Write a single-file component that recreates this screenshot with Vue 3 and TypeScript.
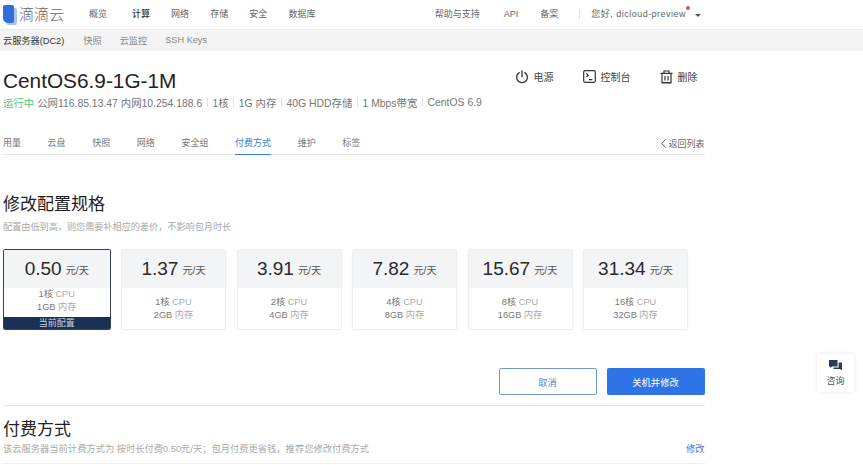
<script setup lang="ts">
const navLeft = [
  { label: '概览', active: false },
  { label: '计算', active: true },
  { label: '网络', active: false },
  { label: '存储', active: false },
  { label: '安全', active: false },
  { label: '数据库', active: false },
]
const subNav = ['快照', '云监控', 'SSH Keys']
const meta = ['1核', '1G 内存', '40G HDD存储', '1 Mbps带宽', 'CentOS 6.9']
const tabs = ['用量', '云盘', '快照', '网络', '安全组', '付费方式', '维护', '标签']
const plans = [
  { price: '0.50', cpu: '1核', mem: '1GB', current: true },
  { price: '1.37', cpu: '1核', mem: '2GB', current: false },
  { price: '3.91', cpu: '2核', mem: '4GB', current: false },
  { price: '7.82', cpu: '4核', mem: '8GB', current: false },
  { price: '15.67', cpu: '8核', mem: '16GB', current: false },
  { price: '31.34', cpu: '16核', mem: '32GB', current: false },
]
</script>

<template>
  <div class="page">
    <header class="topbar">
      <div class="logo">
        <svg class="logo-mark" width="14" height="20" viewBox="0 0 14 20">
          <rect x="3" y="3" width="11" height="17" rx="2" fill="#a9c6ef" />
          <path d="M0 2a2 2 0 0 1 2-2h7a2 2 0 0 1 2 2v14a2 2 0 0 1-2 2H5a5 5 0 0 1-5-5z" fill="#2f6fdc" />
        </svg>
        <span class="logo-text">滴滴云</span>
      </div>
      <nav class="nav-left">
        <span v-for="n in navLeft" :key="n.label" :class="['nav-item', { active: n.active }]">{{ n.label }}</span>
      </nav>
      <div class="nav-right">
        <span class="nr-help">帮助与支持</span>
        <span class="nr-api">API</span>
        <span class="nr-bei">备案</span>
        <span class="nr-sep"></span>
        <span class="nr-user">您好, dicloud-preview<i class="dot"></i></span>
        <i class="caret"></i>
      </div>
    </header>
    <div class="subnav">
      <span class="sub-active">云服务器(DC2)</span>
      <span v-for="s in subNav" :key="s" class="sub-item">{{ s }}</span>
    </div>

    <main class="content">
      <div class="title-row">
        <h1 class="title">CentOS6.9-1G-1M</h1>
        <div class="actions">
          <span class="action">
            <svg width="14" height="14" viewBox="0 0 14 14" fill="none" stroke="#333" stroke-width="1.3" stroke-linecap="round">
              <path d="M4.2 2.6a5.4 5.4 0 1 0 5.6 0" />
              <path d="M7 0.8v6" />
            </svg>
            电源
          </span>
          <span class="action">
            <svg width="13" height="13" viewBox="0 0 13 13" fill="none" stroke="#333" stroke-width="1.2">
              <rect x="0.7" y="0.7" width="11.6" height="11.6" rx="1.2" />
              <path d="M3.2 3.4l2 1.8-2 1.8M6 9.6h3.4" />
            </svg>
            控制台
          </span>
          <span class="action">
            <svg width="13" height="14" viewBox="0 0 13 14" fill="none" stroke="#333" stroke-width="1.2">
              <path d="M0.5 3.4h12M4 3.2V1h5v2.2M2 3.4V13h9V3.4M5 6v4.6M8 6v4.6M2 12.6h9" />
            </svg>
            删除
          </span>
        </div>
      </div>
      <div class="meta">
        <span class="running">运行中</span>
        <span class="ip">公网116.85.13.47 内网10.254.188.6</span>
        <template v-for="m in meta" :key="m">
          <i class="meta-sep"></i>
          <span>{{ m }}</span>
        </template>
      </div>

      <div class="tabs">
        <div class="tab-list">
          <span v-for="t in tabs" :key="t" :class="['tab', { active: t === '付费方式' }]">{{ t }}</span>
        </div>
        <span class="back">
          <svg width="5" height="9" viewBox="0 0 5 9" fill="none" stroke="#555" stroke-width="1">
            <path d="M4.5 0.5L0.7 4.5l3.8 4" />
          </svg>
          返回列表
        </span>
      </div>

      <h2 class="section-title first">修改配置规格</h2>
      <p class="hint">配置由低到高，则您需要补相应的差价，不影响包月时长</p>

      <div class="plans">
        <div v-for="p in plans" :key="p.price" :class="['plan', { current: p.current }]">
          <div class="plan-price">
            <span class="price">{{ p.price }}</span>
            <span class="unit">元/天</span>
          </div>
          <div class="plan-spec">
            <div>{{ p.cpu }} <span class="light">CPU</span></div>
            <div>{{ p.mem }} <span class="light">内存</span></div>
          </div>
          <div v-if="p.current" class="plan-tag">当前配置</div>
        </div>
      </div>

      <div class="buttons">
        <button class="btn ghost" type="button">取消</button>
        <button class="btn primary" type="button">关机并修改</button>
      </div>

      <div class="pay">
        <h2 class="section-title">付费方式</h2>
        <div class="pay-row">
          <span class="pay-text">该云服务器当前计费方式为 按时长付费0.50元/天；包月付费更省钱，推荐您修改付费方式</span>
          <span class="pay-link">修改</span>
        </div>
      </div>
    </main>

    <aside class="consult">
      <svg width="13" height="11" viewBox="0 0 13 11">
        <path d="M0 0h8.5v6.5H3L1.2 8V6.5H0z" fill="#2b3a55" />
        <path d="M9.6 2.6H13v8l-2-1.6H4.6V7.6h5z" fill="#2b3a55" />
      </svg>
      <span>咨询</span>
    </aside>
  </div>
</template>

<style>
html, body { margin: 0; background: #fff; overflow: hidden; }
</style>

<style scoped>
.page {
  position: relative;
  width: 863px;
  height: 465px;
  overflow: hidden;
  font-family: "Liberation Sans", "Noto Sans CJK SC", sans-serif;
  color: #333;
  background: #fff;
}
.topbar {
  height: 30px;
  display: flex;
  align-items: center;
  box-sizing: border-box;
  padding-left: 3px;
  padding-bottom: 2px;
  border-bottom: 1px solid #ececec;
}
.logo { display: flex; align-items: center; width: 86px; }
.logo-mark { margin-top: 2px; }
.logo-text { margin-left: 2px; font-size: 15px; font-weight: 300; color: #666; letter-spacing: 0.1px; }
.nav-left { display: flex; gap: 21px; font-size: 9px; color: #666; }
.nav-item:nth-child(2) { margin-left: 4px; }
.nav-item:nth-child(4) { margin-left: 0.3px; }
.nav-item.active { color: #333; font-weight: 500; }
.nav-right { margin-left: auto; display: flex; align-items: center; font-size: 9px; color: #666; padding-right: 162px; position: relative; }
.nr-help { margin-right: 24px; }
.nr-api { margin-right: 22px; }
.nr-bei { margin-right: 21px; }
.nr-sep { width: 1px; height: 10px; background: #ddd; margin-right: 11px; }
.nr-user { position: relative; letter-spacing: 0.48px; }
.dot {
  position: absolute;
  right: -4px;
  top: -1px;
  width: 4px;
  height: 4px;
  border-radius: 50%;
  background: #d9534f;
}
.caret {
  margin-left: 9px;
  margin-top: 3px;
  width: 0;
  height: 0;
  border-left: 3px solid transparent;
  border-right: 3px solid transparent;
  border-top: 3px solid #555;
}
.subnav {
  height: 21px;
  display: flex;
  align-items: center;
  padding-left: 3px;
  padding-bottom: 2px;
  box-sizing: border-box;
  background: #f4f4f4;
  font-size: 9.2px;
  color: #888;
}
.sub-active { color: #333; margin-right: 19px; }
.sub-item { margin-right: 18px; }
.content { width: 701.5px; margin-left: 3px; }
.title-row { display: flex; justify-content: space-between; height: 42px; align-items: flex-end; }
.title { margin: 0; font-size: 20.8px; line-height: 24px; font-weight: 400; color: #222; }
.actions { display: flex; gap: 29px; font-size: 10px; margin-right: 7px; align-self: flex-end; padding-bottom: 9px; }
.action { display: flex; align-items: center; gap: 5px; color: #444; }
.meta {
  display: flex;
  align-items: center;
  font-size: 10.4px;
  color: #777;
  margin-top: 2px;
  height: 15px;
  white-space: nowrap;
}
.running { color: #3fca7a; margin-right: 3px; }
.meta-sep { width: 1px; height: 9px; background: #e2e2e2; margin: 0 4.6px; }
.tabs {
  display: flex;
  justify-content: space-between;
  height: 19px;
  margin-top: 26px;
  border-bottom: 1px solid #e8e8e8;
  font-size: 9px;
  color: #777;
  box-sizing: border-box;
}
.tab-list { display: flex; gap: 26.6px; }
.tab { height: 19px; line-height: 15px; box-sizing: border-box; }
.tab.active { color: #3c7bd6; border-bottom: 1px solid #3c7bd6; }
.back { display: flex; align-items: center; gap: 2px; height: 15px; color: #666; }
.section-title { margin: 0; font-size: 17px; line-height: 22px; font-weight: 400; color: #222; }
.section-title.first { margin-top: 39px; }
.hint { margin: 4px 0 0; font-size: 9.15px; line-height: 14px; color: #aaa; }
.plans { display: flex; gap: 10.5px; margin-top: 15px; align-items: flex-start; }
.plan {
  position: relative;
  width: 105px;
  height: 81px;
  box-sizing: border-box;
  border: 1px solid #eee;
  border-radius: 2px;
  box-shadow: 0 0 2px rgba(0, 0, 0, 0.06);
  display: flex;
  flex-direction: column;
  overflow: hidden;
}
.plan.current { width: 107.5px; border-color: #3a4352; }
.plan-price {
  height: 38px;
  background: #f3f4f6;
  display: flex;
  align-items: center;
  justify-content: center;
  gap: 4px;
  flex: none;
}
.price { font-size: 19px; color: #2a2a2a; }
.unit { font-size: 10.2px; color: #555; }
.plan-spec {
  flex: 1;
  display: flex;
  flex-direction: column;
  justify-content: center;
  align-items: center;
  font-size: 9.2px;
  line-height: 13px;
  color: #777;
}
.plan.current .plan-spec { padding-bottom: 3px; }
.light { color: #aaa; }
.plan-tag {
  height: 12px;
  background: #1b3055;
  color: #ccd3df;
  font-size: 9px;
  line-height: 12px;
  text-align: center;
  flex: none;
}
.buttons { display: flex; justify-content: flex-end; gap: 10px; margin-top: 38px; }
.btn {
  width: 98px;
  height: 27px;
  padding: 0;
  border-radius: 2px;
  font-family: inherit;
  font-size: 9.3px;
  box-sizing: border-box;
}
.btn.ghost { background: #fff; border: 1px solid #6f9bd1; color: #5a86c0; }
.btn.primary { background: #2f74e6; border: none; color: #fff; }
.pay { margin-top: 10px; border-top: 1px solid #e6e6e6; padding-top: 13px; }
.pay-row {
  display: flex;
  justify-content: space-between;
  align-items: center;
  font-size: 9.27px;
  line-height: 13px;
  margin-top: 2px;
  padding-bottom: 7px;
  border-bottom: 1px solid #eee;
}
.pay-text { color: #aaa; }
.pay-link { color: #3c7bd6; }
.consult {
  position: absolute;
  left: 817px;
  top: 354px;
  width: 37px;
  height: 38px;
  display: flex;
  flex-direction: column;
  align-items: center;
  justify-content: center;
  gap: 3px;
  box-sizing: border-box;
  border-radius: 2px;
  background: #fff;
  box-shadow: 0 0 4px rgba(0, 0, 0, 0.1);
  font-size: 9px;
  color: #555;
}
</style>
